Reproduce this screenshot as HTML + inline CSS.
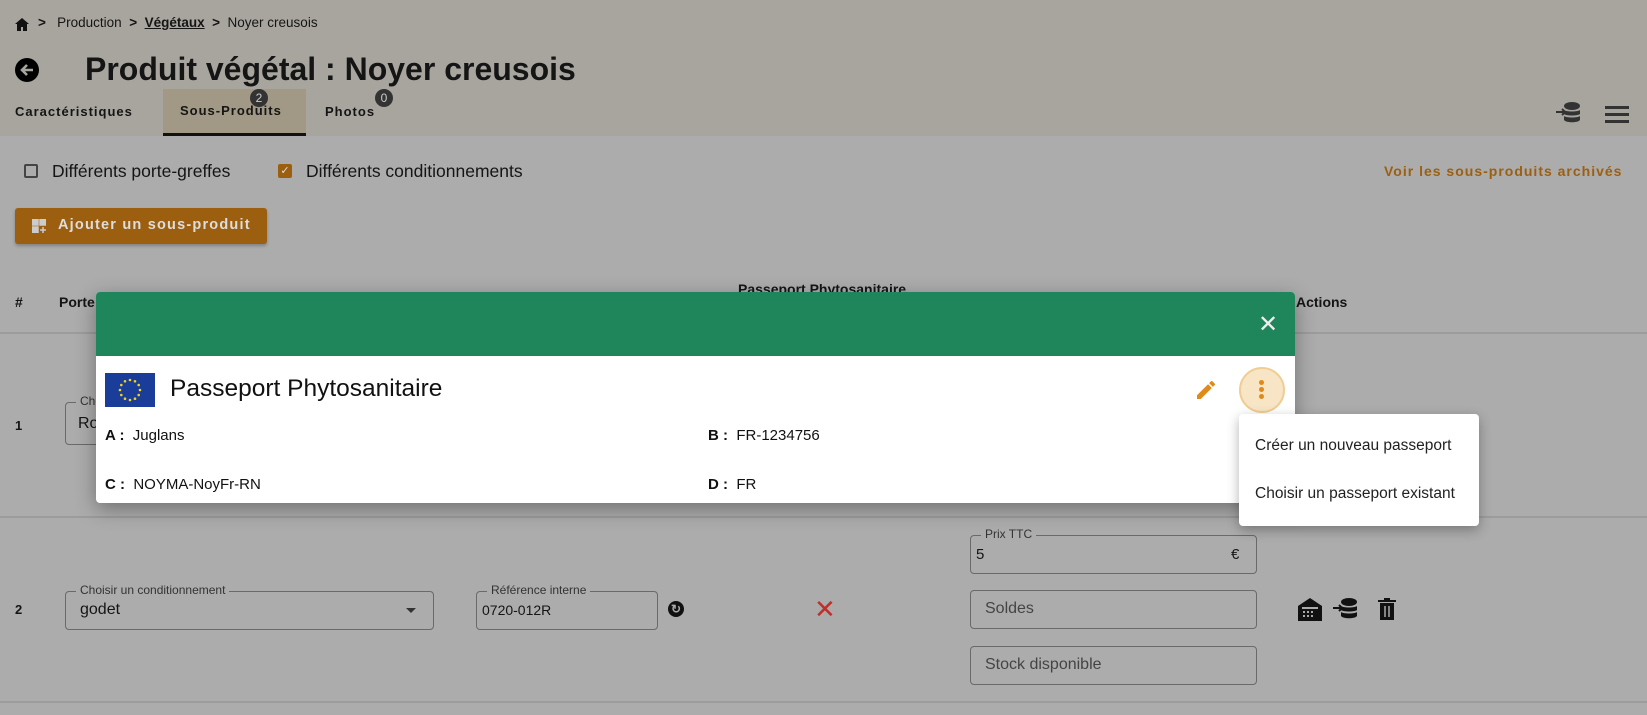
<!DOCTYPE html>
<html><head><meta charset="utf-8"><style>
*{margin:0;padding:0;box-sizing:border-box}
body{width:1647px;height:715px;overflow:hidden;background:#acacac;font-family:"Liberation Sans",sans-serif;color:#151515;position:relative}
.a{position:absolute;white-space:nowrap}
.hdr{position:absolute;left:0;top:0;width:1647px;height:136px;background:#a8a59e}
.inp{position:absolute;border:1px solid #6a6a6a;border-radius:4px}
.lbl{position:absolute;top:-9px;left:10px;background:#acacac;padding:0 4px;font-size:12px;color:#333}
.line{position:absolute;left:0;width:1647px;height:2px;background:#9c9c9c}
</style></head><body>
<div class="hdr"></div>
<svg class="a" style="left:15px;top:18px" width="14" height="13" viewBox="0 0 14 13"><path d="M7 0L0 6h2v7h4V9h2v4h4V6h2z" fill="#111"/></svg>
<div class="a" style="left:38px;top:15px;font-size:13.5px"><b>&gt;</b>&nbsp;&nbsp; Production &nbsp;<b>&gt;</b>&nbsp; <b style="text-decoration:underline">Végétaux</b> &nbsp;<b>&gt;</b>&nbsp; Noyer creusois</div>
<svg class="a" style="left:15px;top:58px" width="24" height="24" viewBox="0 0 24 24"><circle cx="12" cy="12" r="12" fill="#000"/><path d="M18 12H8M12 7l-5 5 5 5" stroke="#a8a59e" stroke-width="2.6" fill="none"/></svg>
<div class="a" style="left:85px;top:51px;font-size:32px;font-weight:bold">Produit végétal : Noyer creusois</div>
<div class="a" style="left:163px;top:89px;width:143px;height:47px;background:#a19885;border-bottom:3px solid #111"></div>
<div class="a" style="left:15px;top:104px;font-size:13px;font-weight:bold;letter-spacing:1px">Caractéristiques</div>
<div class="a" style="left:180px;top:103px;font-size:13px;font-weight:bold;letter-spacing:1px">Sous-Produits</div>
<div class="a" style="left:250px;top:89px;width:18px;height:18px;border-radius:9px;background:#333;color:#ccc;font-size:12px;text-align:center;line-height:18px">2</div>
<div class="a" style="left:325px;top:104px;font-size:13px;font-weight:bold;letter-spacing:1px">Photos</div>
<div class="a" style="left:375px;top:89px;width:18px;height:18px;border-radius:9px;background:#333;color:#ccc;font-size:12px;text-align:center;line-height:18px">0</div>
<svg class="a" style="left:1555px;top:101px" width="26" height="24" viewBox="0 0 26 24"><ellipse cx="17" cy="5" rx="8" ry="4" fill="#333"/><path d="M9 9c2 2 14 2 16 0v4c-2 2-14 2-16 0zM9 15c2 2 14 2 16 0v4c-2 3-14 3-16 0z" fill="#333"/><path d="M1 11h9M7 8l3 3-3 3" stroke="#333" stroke-width="2" fill="none"/></svg>
<div class="a" style="left:1605px;top:106px;width:24px;height:3px;background:#333;box-shadow:0 7px 0 #333,0 14px 0 #333"></div>
<div class="a" style="left:24px;top:164px;width:14px;height:14px;border:2px solid #444;border-radius:2px"></div>
<div class="a" style="left:52px;top:161px;font-size:17.5px">Différents porte-greffes</div>
<div class="a" style="left:278px;top:164px;width:14px;height:14px;background:#9c5f10;border-radius:2px;color:#ddd;font-size:11px;text-align:center;line-height:14px">✓</div>
<div class="a" style="left:306px;top:161px;font-size:17.5px">Différents conditionnements</div>
<div class="a" style="left:1384px;top:163px;font-size:14px;color:#9c5f10;letter-spacing:1px;font-weight:bold">Voir les sous-produits archivés</div>
<div class="a" style="left:15px;top:208px;width:252px;height:36px;background:#9c5f10;border-radius:3px;box-shadow:0 2px 3px rgba(0,0,0,.25)"></div>
<svg class="a" style="left:32px;top:219px" width="14" height="14" viewBox="0 0 14 14"><path d="M0 0h6v6H0zM8 0h6v6H8zM0 8h6v6H0zM8 11h6M11 8v6" fill="#ccc" stroke="#ccc" stroke-width="1.5"/></svg>
<div class="a" style="left:58px;top:217px;font-size:14.5px;color:#ddd;font-weight:bold;letter-spacing:1.2px">Ajouter un sous-produit</div>
<div class="a" style="left:15px;top:294px;font-size:14px;font-weight:bold">#</div>
<div class="a" style="left:59px;top:294px;font-size:14px;font-weight:bold">Porte</div>
<div class="a" style="left:738px;top:281px;font-size:14px;font-weight:bold">Passeport Phytosanitaire</div>
<div class="a" style="left:1296px;top:294px;font-size:14px;font-weight:bold">Actions</div>
<div class="line" style="top:332px"></div>
<div class="a" style="left:15px;top:418px;font-size:13px;font-weight:bold">1</div>
<div class="inp" style="left:65px;top:402px;width:369px;height:43px"><span class="lbl">Choisir</span><span class="a" style="left:12px;top:12px;font-size:16px">Ro</span></div>
<div class="line" style="top:516px"></div>
<div class="a" style="left:15px;top:602px;font-size:13px;font-weight:bold">2</div>
<div class="inp" style="left:65px;top:591px;width:369px;height:39px"><span class="lbl">Choisir un conditionnement</span><span class="a" style="left:14px;top:9px;font-size:16px">godet</span><span class="a" style="left:340px;top:16px;border:5px solid transparent;border-top-color:#333"></span></div>
<div class="inp" style="left:476px;top:591px;width:182px;height:39px"><span class="lbl">Référence interne</span><span class="a" style="left:5px;top:10px;font-size:14px">0720-012R</span></div>
<div class="a" style="left:668px;top:601px;width:16px;height:16px;border-radius:8px;background:#111;color:#aaa;font-size:12px;text-align:center;line-height:16px;font-weight:bold">↻</div>
<div class="a" style="left:814px;top:594px;font-size:26px;color:#c0302a">✕</div>
<div class="inp" style="left:970px;top:535px;width:287px;height:39px"><span class="lbl">Prix TTC</span><span class="a" style="left:5px;top:10px;font-size:15px">5</span><span class="a" style="left:260px;top:10px;font-size:15px">€</span></div>
<div class="inp" style="left:970px;top:590px;width:287px;height:39px"><span class="a" style="left:14px;top:9px;font-size:16px;color:#444">Soldes</span></div>
<div class="inp" style="left:970px;top:646px;width:287px;height:39px"><span class="a" style="left:14px;top:9px;font-size:16px;color:#444">Stock disponible</span></div>
<svg class="a" style="left:1297px;top:597px" width="26" height="24" viewBox="0 0 26 24"><path d="M1 9L13 1l12 8v15H1z" fill="#111"/><path d="M5 11h16M6 15h2M10 15h2M14 15h2M6 19h2M10 19h2M14 19h2" stroke="#aaa" stroke-width="2"/></svg>
<svg class="a" style="left:1332px;top:597px" width="26" height="24" viewBox="0 0 26 24"><ellipse cx="17" cy="5" rx="8" ry="4" fill="#111"/><path d="M9 9c2 2 14 2 16 0v4c-2 2-14 2-16 0zM9 15c2 2 14 2 16 0v4c-2 3-14 3-16 0z" fill="#111"/><path d="M1 11h9M7 8l3 3-3 3" stroke="#111" stroke-width="2" fill="none"/></svg>
<svg class="a" style="left:1377px;top:597px" width="20" height="24" viewBox="0 0 20 24"><path d="M1 3h18v2H1zM7 1h6v2H7zM3 6h14v17H3z" fill="#111"/><path d="M8 9v11M12 9v11" stroke="#aaa" stroke-width="1.5"/></svg>
<div class="line" style="top:701px"></div>
<div class="a" style="left:96px;top:292px;width:1199px;height:211px;background:#fff;border-radius:4px;box-shadow:0 6px 20px rgba(0,0,0,.35);overflow:hidden">
<div style="height:64px;background:#1f855b"></div>
</div>
<div class="a" style="left:1258px;top:310px;font-size:24px;color:#eee">✕</div>
<svg class="a" style="left:105px;top:373px" width="50" height="34" viewBox="0 0 50 34"><rect width="50" height="34" fill="#1a3d99"/><g fill="#f3d21a"><circle cx="25" cy="7" r="1.3"/><circle cx="25" cy="27" r="1.3"/><circle cx="15" cy="17" r="1.3"/><circle cx="35" cy="17" r="1.3"/><circle cx="30" cy="8.3" r="1.3"/><circle cx="20" cy="8.3" r="1.3"/><circle cx="30" cy="25.7" r="1.3"/><circle cx="20" cy="25.7" r="1.3"/><circle cx="16.3" cy="12" r="1.3"/><circle cx="33.7" cy="12" r="1.3"/><circle cx="16.3" cy="22" r="1.3"/><circle cx="33.7" cy="22" r="1.3"/></g></svg>
<div class="a" style="left:170px;top:375px;font-size:24.5px;color:#111">Passeport Phytosanitaire</div>
<svg class="a" style="left:1194px;top:378px" width="24" height="24" viewBox="0 0 24 24"><path d="M3 17.25V21h3.75L17.81 9.94l-3.75-3.75zM20.71 7.04a1 1 0 000-1.41l-2.34-2.34a1 1 0 00-1.41 0l-1.83 1.83 3.75 3.75z" fill="#e08a1a"/></svg>
<div class="a" style="left:1239px;top:367px;width:46px;height:46px;border-radius:23px;background:#f7e5c6;border:2px solid #f0cd92"></div>
<div class="a" style="left:1259px;top:380px;width:5px;height:5px;border-radius:3px;background:#e08a1a;box-shadow:0 7px 0 #e08a1a,0 14px 0 #e08a1a"></div>
<div class="a" style="left:105px;top:427px;font-size:15px;color:#111"><b>A :</b>&nbsp; Juglans</div>
<div class="a" style="left:708px;top:427px;font-size:15px;color:#111"><b>B :</b>&nbsp; FR-1234756</div>
<div class="a" style="left:105px;top:476px;font-size:15px;color:#111"><b>C :</b>&nbsp; NOYMA-NoyFr-RN</div>
<div class="a" style="left:708px;top:476px;font-size:15px;color:#111"><b>D :</b>&nbsp; FR</div>
<div class="a" style="left:1239px;top:414px;width:240px;height:112px;background:#fff;border-radius:4px;box-shadow:0 4px 12px rgba(0,0,0,.3)"></div>
<div class="a" style="left:1255px;top:437px;font-size:15.5px;color:#222">Créer un nouveau passeport</div>
<div class="a" style="left:1255px;top:485px;font-size:15.5px;color:#222">Choisir un passeport existant</div>
</body></html>
